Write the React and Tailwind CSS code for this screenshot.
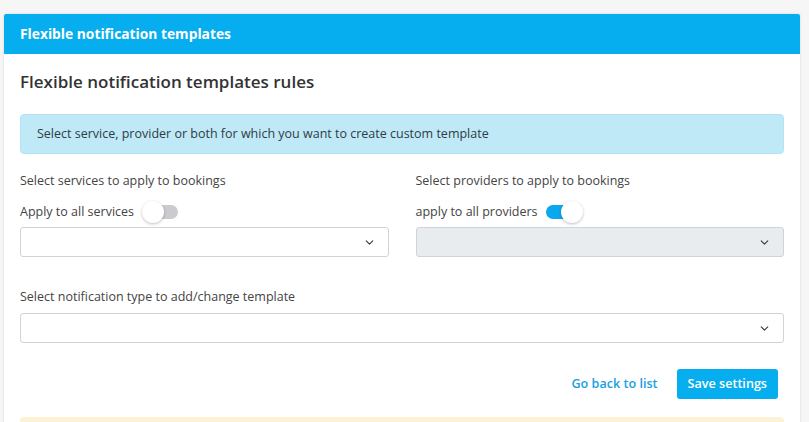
import { ChevronDown } from 'lucide-react';

const Toggle = ({ on }) => (
  <span className="relative inline-flex items-center w-[36px] h-[24px]">
    <span
      className={
        on
          ? 'block w-[30px] h-[14px] rounded-full bg-[#0aa8ee] ml-0'
          : 'block w-[30px] h-[14px] rounded-full bg-[#cbcbcf] ml-[6px]'
      }
    />
    <span
      className={
        on
          ? 'absolute top-[1px] left-[15px] w-[22px] h-[22px] rounded-full bg-white shadow-[0_1px_3px_rgba(0,0,0,0.25)]'
          : 'absolute top-[1px] left-0 w-[22px] h-[22px] rounded-full bg-white shadow-[0_1px_3px_rgba(0,0,0,0.25)]'
      }
    />
  </span>
);

const Select = ({ disabled }) => (
  <div
    className={
      disabled
        ? 'h-[30px] rounded-[3px] border border-[#ced4da] bg-[#e9ecef] flex items-center justify-end pr-[12px]'
        : 'h-[30px] rounded-[3px] border border-[#ced4da] bg-white flex items-center justify-end pr-[12px]'
    }
  >
    <ChevronDown size={13} strokeWidth={2} className="text-[#343a40]" />
  </div>
);

export default function App() {
  return (
    <div
      className="min-h-[422px] bg-[#f6f6f6] pt-[14px] pl-[4px] pr-[9px] text-[12.5px] text-[#444]"
      style={{ fontFamily: '"Open Sans", "Noto Sans", sans-serif' }}
    >
      <div className="bg-white shadow-[0_0_3px_rgba(0,0,0,0.12)] rounded-t-[2px] overflow-hidden">
        <div className="h-[40px] bg-[#07aeef] flex items-center px-[16px]">
          <h3 className="text-white font-bold text-[13.8px]">Flexible notification templates</h3>
        </div>
        <div className="px-[16px] pt-[16px] pb-[4px]">
          <h2 className="text-[17px] font-semibold text-[#333] leading-[24px]">
            Flexible notification templates rules
          </h2>

          <div className="mt-[20px] h-[40px] rounded-[4px] border border-[#b3e3f6] bg-[#c0e9f8] flex items-center px-[16px] text-[#2f3b45]">
            Select service, provider or both for which you want to create custom template
          </div>

          <div className="mt-[17px] grid grid-cols-2 gap-x-[27px]">
            <div>
              <div className="leading-[20px] text-[#444]">Select services to apply to bookings</div>
              <div className="mt-[9px] mb-[3px] flex items-center gap-[8px] leading-[20px]">
                <span>Apply to all services</span>
                <Toggle on={false} />
              </div>
              <Select />
            </div>
            <div>
              <div className="leading-[20px] text-[#444]">Select providers to apply to bookings</div>
              <div className="mt-[9px] mb-[3px] flex items-center gap-[8px] leading-[20px]">
                <span>apply to all providers</span>
                <Toggle on />
              </div>
              <Select disabled />
            </div>
          </div>

          <div className="mt-[30px] leading-[20px] text-[#444]">
            Select notification type to add/change template
          </div>
          <div className="mt-[6px]">
            <Select />
          </div>

          <div className="mt-[26px] flex items-center justify-end gap-[19px] pr-[6px]">
            <a href="#" className="text-[#1a9fe3] font-semibold text-[12.6px]">
              Go back to list
            </a>
            <button className="h-[30px] px-[11px] rounded-[3px] bg-[#07aeef] text-white font-semibold text-[12.6px]">
              Save settings
            </button>
          </div>

          <div className="mt-[18px] h-[40px] rounded-t-[4px] bg-[#fdf1d6]" />
        </div>
      </div>
    </div>
  );
}
